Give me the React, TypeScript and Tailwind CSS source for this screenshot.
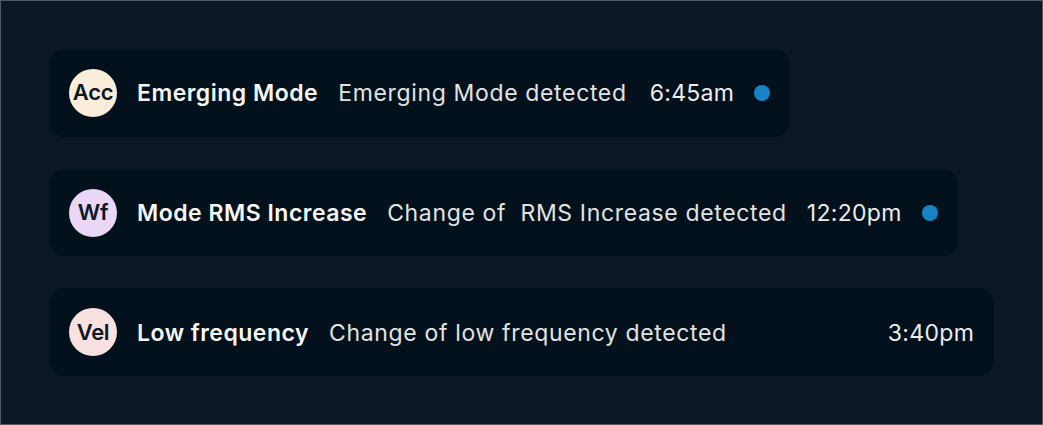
import React from "react";

type Item = {
  initials: string;
  avatar: string;
  title: string;
  desc: string;
  time: string;
  unread: boolean;
  timeClass: string;
};

const items: Item[] = [
  {
    initials: "Acc",
    avatar: "bg-[#faeedb]",
    title: "Emerging Mode",
    desc: "Emerging Mode detected",
    time: "6:45am",
    unread: true,
    timeClass: "ml-[3px]",
  },
  {
    initials: "Wf",
    avatar: "bg-[#ead6f5]",
    title: "Mode RMS Increase",
    desc: "Change of\u00a0 RMS Increase detected",
    time: "12:20pm",
    unread: true,
    timeClass: "ml-0",
  },
  {
    initials: "Vel",
    avatar: "bg-[#f9e1e1]",
    title: "Low frequency",
    desc: "Change of low frequency detected",
    time: "3:40pm",
    unread: false,
    timeClass: "ml-[141px]",
  },
];

export default function App() {
  return (
    <div
      className="w-[1043px] h-[425px] bg-[#0b1824] border border-[#4f5b66] box-border p-[48px] flex flex-col items-start gap-8"
      style={{ fontFamily: "Inter, 'Noto Sans', sans-serif" }}
    >
      {items.map((it) => (
        <div
          key={it.title}
          className="h-[88px] flex items-center gap-5 px-5 rounded-2xl bg-[#02111c]"
        >
          <div
            className={`w-12 h-12 rounded-full ${it.avatar} flex items-center justify-center text-[22px] font-semibold text-[#0b1824] tracking-[-0.3px]`}
          >
            {it.initials}
          </div>
          <div className="text-[23px] font-semibold text-[#f7f7f7] leading-none whitespace-nowrap tracking-[0.5px] pt-[2px]">
            {it.title}
          </div>
          <div className="text-[23px] text-[#e3e3e3] leading-none whitespace-nowrap tracking-[0.65px] pt-[2px]">
            {it.desc}
          </div>
          <div
            className={`text-[23px] text-[#ececec] leading-none whitespace-nowrap tracking-[0.3px] pt-[2px] ${it.timeClass}`}
          >
            {it.time}
          </div>
          {it.unread && (
            <div className="w-4 h-4 rounded-full bg-[#1783c7]" />
          )}
        </div>
      ))}
    </div>
  );
}
